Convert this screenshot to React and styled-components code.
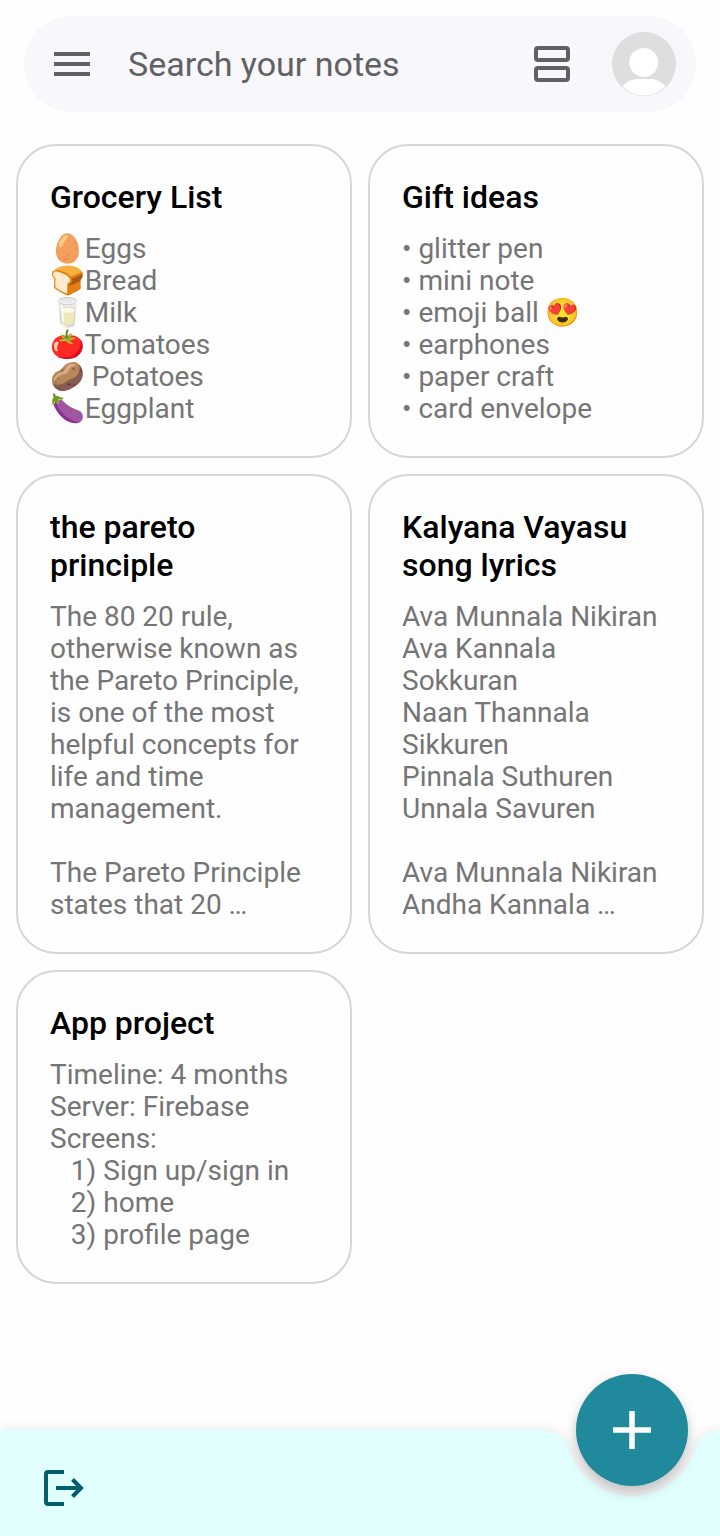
import React from "react";
import styled, { createGlobalStyle } from "styled-components";

const GlobalStyle = createGlobalStyle`
  *, *::before, *::after { box-sizing: border-box; }
  body {
    margin: 0;
    background: #fefefe;
    font-family: Roboto, "Noto Color Emoji", sans-serif;
  }
`;

const Page = styled.div`
  display: flex;
  flex-direction: column;
  min-height: 100vh;
`;

const SearchBar = styled.header`
  display: flex;
  align-items: center;
  height: 96px;
  margin: 16px 24px 32px;
  padding: 0 20px 0 24px;
  border-radius: 48px;
  background: #f7f7fc;
`;

const IconButton = styled.button`
  display: block;
  flex: none;
  width: ${(p) => p.$size || 48}px;
  height: ${(p) => p.$size || 48}px;
  padding: 0;
  border: 0;
  border-radius: 50%;
  background: none;
  color: ${(p) => p.$color || "#616161"};
  cursor: pointer;

  svg { display: block; }
`;

const SearchInput = styled.input`
  flex: 1;
  min-width: 0;
  margin: 0 32px;
  padding: 0;
  border: 0;
  outline: 0;
  background: none;
  color: #616161;
  font: 400 34px/40px Roboto, sans-serif;

  &::placeholder { color: #616161; opacity: 1; }
`;

const Tools = styled.div`
  display: flex;
  align-items: center;
  gap: 36px;
`;

const NotesGrid = styled.main`
  display: grid;
  grid-template-columns: repeat(2, minmax(0, 1fr));
  align-items: start;
  align-content: start;
  flex: 1;
  gap: 16px;
  padding: 0 16px 96px;
`;

const NoteCard = styled.article`
  display: flex;
  flex-direction: column;
  gap: 17px;
  padding: 32px 32px 31px;
  border: 2px solid #d6d6d6;
  border-radius: 40px;
`;

const NoteTitle = styled.h2`
  margin: 0;
  color: #000;
  font-size: 32px;
  font-weight: 500;
  line-height: 38px;
`;

const NoteText = styled.p`
  margin: 0;
  color: #757575;
  font-size: 28px;
  line-height: 32px;
  white-space: pre-wrap;
`;

const BottomBar = styled.footer`
  position: relative;
  padding: 34px 40px 24px;
`;

const BarSurface = styled.div`
  position: absolute;
  inset: 0;
  display: flex;
  filter: drop-shadow(0 0 6px rgba(0, 0, 0, 0.1));

  svg { display: block; flex: none; }
`;

const BarFill = styled.div`
  flex: 1;
  background: #e2ffff;
`;

const BarActions = styled.nav`
  position: relative;
  display: flex;
`;

const AddButton = styled.button`
  position: absolute;
  top: -56px;
  right: 32px;
  display: flex;
  align-items: center;
  justify-content: center;
  width: 112px;
  height: 112px;
  padding: 0;
  border: 0;
  border-radius: 50%;
  background: #20899b;
  color: #fff;
  box-shadow: 0 7px 8px rgba(0, 0, 0, 0.14), 0 4px 16px rgba(0, 0, 0, 0.12);
  cursor: pointer;
`;

const MenuIcon = () => (
  <svg width="48" height="48" viewBox="0 0 24 24" fill="currentColor" aria-hidden="true">
    <path d="M3 18h18v-2H3v2zm0-5h18v-2H3v2zm0-7v2h18V6H3z" />
  </svg>
);

const ListViewIcon = () => (
  <svg width="48" height="48" viewBox="0 0 48 48" fill="none" stroke="currentColor" strokeWidth="4" aria-hidden="true">
    <rect x="8" y="8" width="32" height="12" rx="2" />
    <rect x="8" y="28" width="32" height="12" rx="2" />
  </svg>
);

const AvatarIcon = () => (
  <svg width="64" height="64" viewBox="0 0 64 64" aria-hidden="true">
    <circle cx="32" cy="32" r="32" fill="#dedede" />
    <circle cx="31.7" cy="30.5" r="14.5" fill="#fff" />
    <path d="M10.5 54.5C15 49 21 47 25 47h14c5 0 10.500 2.500 14.500 7.500C47.500 60.500 40 63.300 32 63.300S16.500 60.500 10.500 54.500z" fill="#fff" />
  </svg>
);

const LogoutIcon = () => (
  <svg width="48" height="48" viewBox="0 0 48 48" fill="none" stroke="currentColor" strokeWidth="4" aria-hidden="true">
    <path d="M24 8H8a2 2 0 0 0-2 2v28a2 2 0 0 0 2 2h16" />
    <path d="M16 24h25M32.500 15.500l8.500 8.500-8.500 8.500" />
  </svg>
);

const PlusIcon = () => (
  <svg width="56" height="56" viewBox="0 0 56 56" fill="none" stroke="currentColor" strokeWidth="5.5" aria-hidden="true">
    <path d="M9 28h38M28 9v38" />
  </svg>
);

const BarNotch = () => (
  <svg width="184" height="106" viewBox="0 0 184 106" aria-hidden="true">
    <path d="M0 0Q27 0 32 16A66 66 0 0 0 160 16Q165 0 192 0V106H0z" fill="#e2ffff" />
  </svg>
);

const notes = [
  {
    title: "Grocery List",
    text: "🥚Eggs\n🍞Bread\n🥛Milk\n🍅Tomatoes\n🥔 Potatoes\n🍆Eggplant",
  },
  {
    title: "Gift ideas",
    text: "• glitter pen\n• mini note\n• emoji ball 😍\n• earphones\n• paper craft\n• card envelope",
  },
  {
    title: "the pareto principle",
    text: "The 80 20 rule, otherwise known as the Pareto Principle, is one of the most helpful concepts for life and time management.\n\nThe Pareto Principle states that 20 …",
  },
  {
    title: "Kalyana Vayasu song lyrics",
    text: "Ava Munnala Nikiran\nAva Kannala Sokkuran\nNaan Thannala Sikkuren\nPinnala Suthuren\nUnnala Savuren\n\nAva Munnala Nikiran\nAndha Kannala …",
  },
  {
    title: "App project",
    text: "Timeline: 4 months\nServer: Firebase\nScreens:\n   1) Sign up/sign in\n   2) home\n   3) profile page",
  },
];

export default function App() {
  return (
    <Page>
      <GlobalStyle />
      <SearchBar>
        <IconButton aria-label="Menu"><MenuIcon /></IconButton>
        <SearchInput type="text" placeholder="Search your notes" aria-label="Search your notes" />
        <Tools>
          <IconButton aria-label="Switch to list view"><ListViewIcon /></IconButton>
          <IconButton $size={64} aria-label="Account"><AvatarIcon /></IconButton>
        </Tools>
      </SearchBar>
      <NotesGrid>
        {notes.map((note) => (
          <NoteCard key={note.title}>
            <NoteTitle>{note.title}</NoteTitle>
            <NoteText>{note.text}</NoteText>
          </NoteCard>
        ))}
      </NotesGrid>
      <BottomBar>
        <BarSurface>
          <BarFill />
          <BarNotch />
        </BarSurface>
        <BarActions>
          <IconButton $color="#045d6e" aria-label="Log out"><LogoutIcon /></IconButton>
        </BarActions>
        <AddButton aria-label="Add note"><PlusIcon /></AddButton>
      </BottomBar>
    </Page>
  );
}
